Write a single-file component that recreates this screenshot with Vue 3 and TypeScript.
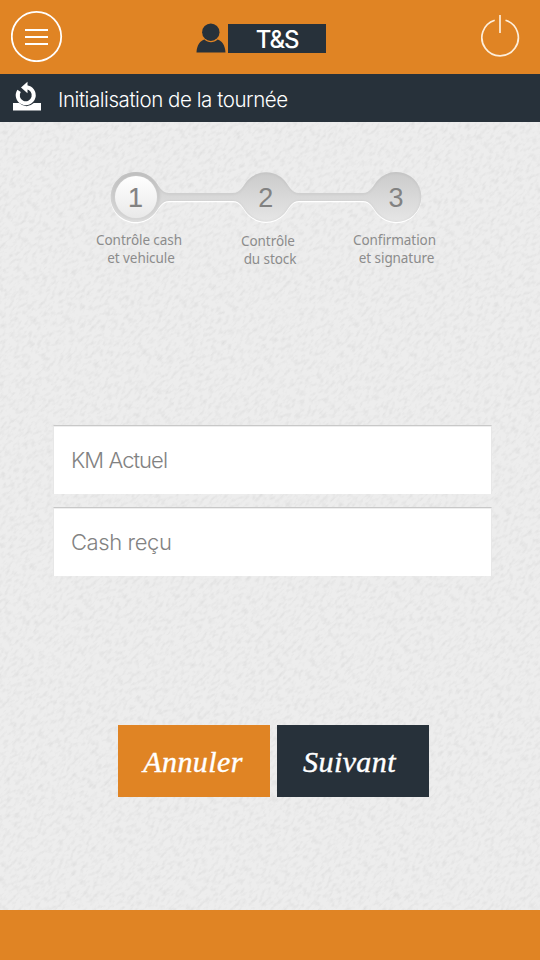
<script setup lang="ts">
import { ref } from 'vue'

interface Step {
  id: number
  lines: string[]
}

const steps: Step[] = [
  { id: 1, lines: ['Contrôle cash', 'et vehicule'] },
  { id: 2, lines: ['Contrôle', 'du stock'] },
  { id: 3, lines: ['Confirmation', 'et signature'] },
]

const kilometres = ref('')
const cash = ref('')
</script>

<template>
  <div class="screen">
    <header class="topbar">
      <button class="icon-button" aria-label="Menu">
        <svg width="52" height="52" viewBox="0 0 52 52" fill="none" stroke="#fff">
          <circle cx="25.500" cy="26.500" r="24.700" stroke-width="1.800" />
          <path d="M14 20h23M14 27h23M14 34h23" stroke-width="2" />
        </svg>
      </button>
      <div class="user">
        <svg width="30" height="30" viewBox="0 0 30 30" fill="#27313a">
          <path d="M0.500 29.500C.8 22 4.500 17.500 8.500 16.500C12 20 18 20 21.500 16.500C25.500 17.500 29.200 22 29.500 29.500Z" />
          <circle cx="14.800" cy="9.200" r="8.700" />
        </svg>
        <span class="user-name">T&amp;S</span>
      </div>
      <button class="icon-button" aria-label="Quitter">
        <svg width="40" height="44" viewBox="0 0 40 44" fill="none" stroke="#fdeedb">
          <path d="M14.700 6.200A18.200 18.200 0 1 0 25.500 6.200" stroke-width="1.700" />
          <path d="M20 1v18" stroke-width="1.700" />
        </svg>
      </button>
    </header>

    <div class="titlebar">
      <svg width="30" height="30" viewBox="0 0 30 30">
        <path d="M1 22h6.200Q14.500 28.500 21.800 22H29V29.500H1Z" fill="#fff" />
        <path d="M7.100 9.800A8 8 0 1 0 14.500 6.300" fill="none" stroke="#fff" stroke-width="4" />
        <path d="M9 6.500L15.500 .8V12.300Z" fill="#fff" />
      </svg>
      <h1>Initialisation de la tournée</h1>
    </div>

    <main class="content">
      <svg class="paper" width="1100" height="1100" aria-hidden="true">
        <filter id="grain" x="0" y="0" width="100%" height="100%" color-interpolation-filters="sRGB">
          <feTurbulence type="fractalNoise" baseFrequency="0.16 0.32" numOctaves="3" seed="8" />
          <feColorMatrix values="0 0 0 0 0  0 0 0 0 0  0 0 0 0 0  .13 0 0 0 -.058" />
        </filter>
        <rect width="1100" height="1100" filter="url(#grain)" />
      </svg>

      <section class="stepper">
        <svg class="track" width="320" height="56" viewBox="0 0 320 56">
          <defs>
            <linearGradient id="groove" x1="0" y1="0" x2="0" y2="1">
              <stop offset="0" stop-color="#cbcbcb" />
              <stop offset=".45" stop-color="#d7d7d7" />
              <stop offset="1" stop-color="#e6e6e6" />
            </linearGradient>
            <linearGradient id="knob" x1="0" y1="0" x2="0" y2="1">
              <stop offset="0" stop-color="#ffffff" />
              <stop offset="1" stop-color="#e9e9e9" />
            </linearGradient>
            <linearGradient id="rim" x1="0" y1="0" x2="0" y2="1">
              <stop offset="0" stop-color="#bdbdbd" />
              <stop offset="1" stop-color="#d2d2d2" />
            </linearGradient>
            <path id="shape" d="M30 3A25 25 0 0 1 48 11C53 16.300 55 24 63 24H127C135 24 137 16.300 142 11A25 25 0 0 1 178 11C183 16.300 185 24 193 24H257C265 24 267 16.300 272 11A25 25 0 1 1 272 45C267 39.700 265 32 257 32H193C185 32 183 39.700 178 45A25 25 0 0 1 142 45C137 39.700 135 32 127 32H63C55 32 53 39.700 48 45A25 25 0 1 1 30 3Z" />
            <filter id="soft" x="-20%" y="-20%" width="140%" height="140%"><feGaussianBlur stdDeviation="1" /></filter>
            <clipPath id="inside"><use href="#shape" /></clipPath>
          </defs>
          <use href="#shape" y="1.300" fill="#fff" />
          <use href="#shape" fill="url(#groove)" />
          <g clip-path="url(#inside)">
            <use href="#shape" y=".5" fill="none" stroke="url(#rim)" stroke-width="1.300" filter="url(#soft)" />
            <circle cx="30" cy="27.500" r="22.500" fill="none" stroke="url(#rim)" stroke-width="3" filter="url(#soft)" />
          </g>
          <circle cx="30" cy="28" r="21" fill="url(#knob)" />
          <g class="digits">
            <text v-for="(step, i) in steps" :key="step.id" :x="29.500 + i * 130.200" y="37.500" text-anchor="middle" :class="{ current: i === 0 }">{{ step.id }}</text>
          </g>
        </svg>
        <ol class="labels">
          <li v-for="step in steps" :key="step.id">
            <span v-for="line in step.lines" :key="line">{{ line }}</span>
          </li>
        </ol>
      </section>

      <form class="fields" @submit.prevent>
        <input v-model="kilometres" type="text" placeholder="KM Actuel" />
        <input v-model="cash" class="cash" type="text" placeholder="Cash reçu" />
      </form>

      <div class="actions">
        <button class="cancel">Annuler</button>
        <button class="next">Suivant</button>
      </div>
    </main>

    <footer class="bottombar"></footer>
  </div>
</template>

<style>
html,
body {
  margin: 0;
  overflow: hidden;
}
</style>

<style scoped>
.screen {
  display: flex;
  flex-direction: column;
  width: 540px;
  height: 960px;
  font-family: Inter, "Liberation Sans", sans-serif;
  background: #ededed;
}

button {
  border: 0;
  padding: 0;
  background: none;
}

svg {
  display: block;
  flex: none;
}

.topbar {
  display: flex;
  align-items: center;
  justify-content: space-between;
  box-sizing: border-box;
  height: 74px;
  padding: 0 20px 2px 11px;
  background: #e08424;
}

.user {
  display: flex;
  gap: 2px;
  align-items: center;
  padding: 5px 22px 0 0;
}

.user svg {
  margin-top: -1px;
}

.user-name {
  width: 98px;
  height: 29px;
  color: #fff;
  background: #27313a;
  font-size: 24px;
  font-weight: 450;
  letter-spacing: -1.200px;
  line-height: 32px;
  text-align: center;
  text-indent: 1px;
}

.titlebar {
  display: flex;
  align-items: center;
  gap: 16px;
  box-sizing: border-box;
  height: 48px;
  padding: 0 12px 4px;
  background: #27313a;
}

h1 {
  margin: 0;
  padding-top: 7px;
  color: #fff;
  font-size: 20.500px;
  font-weight: 350;
  letter-spacing: -0.440px;
  line-height: 28px;
  white-space: nowrap;
}

.content {
  position: relative;
  flex: 1;
  overflow: hidden;
}

.paper {
  position: absolute;
  top: -156px;
  left: -280px;
  transform: rotate(-45deg);
}

.stepper {
  position: relative;
  padding: 47px 0 0 71px;
}

.track {
  margin-left: 35px;
}

.digits text {
  fill: #828282;
  font-family: "Liberation Sans", Arial, sans-serif;
  font-size: 27px;
}

.digits .current {
  stroke: #828282;
  stroke-width: 0.200px;
}

.labels {
  display: grid;
  grid-template-columns: 136px 122px 131px;
  margin: 0;
  padding: 6px 0 0;
  list-style: none;
  color: #8c8c8c;
  font-family: "Noto Sans", sans-serif;
  font-size: 13.500px;
  letter-spacing: -0.080px;
  line-height: 18px;
  text-align: center;
}

.labels li {
  display: flex;
  flex-direction: column;
}

.labels li span + span {
  padding-left: 4px;
}

.labels li:nth-child(2) {
  padding-top: 1px;
}

.fields {
  position: relative;
  display: flex;
  flex-direction: column;
  gap: 13px;
  margin: 157px 48px 0 53px;
}

input {
  box-sizing: border-box;
  width: 439px;
  height: 69px;
  padding: 0 17px 1px;
  border: 1px solid #e7e7e7;
  border-top: 1px solid #c8c8c8;
  border-bottom: 0;
  border-radius: 0;
  background: #fff;
  box-shadow: inset 0 1px #eee;
  font-family: inherit;
  font-size: 22px;
  font-weight: 350;
  letter-spacing: -0.950px;
}

input.cash {
  letter-spacing: -0.400px;
}

input::placeholder {
  color: #828282;
  opacity: 1;
}

.actions {
  position: relative;
  display: flex;
  gap: 7px;
  margin: 149px 0 0 118px;
}

.actions button {
  width: 152px;
  height: 72px;
  padding-top: 1px;
  color: #fff;
  font-family: "Liberation Serif", "Times New Roman", serif;
  font-size: 30px;
  font-style: italic;
  letter-spacing: 0.400px;
  -webkit-text-stroke: 0.400px #fff;
}

.actions .cancel {
  padding-right: 2px;
  background: #e08424;
}

.actions .next {
  padding-right: 7px;
  background: #27313a;
}

.bottombar {
  height: 50px;
  background: #e08424;
}
</style>
